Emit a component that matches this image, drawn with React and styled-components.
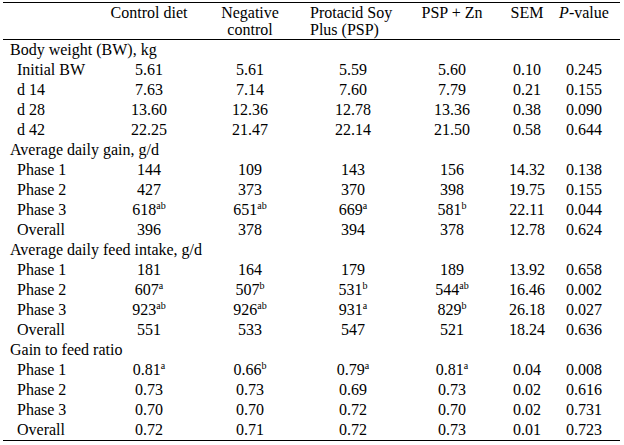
import styled, { createGlobalStyle } from 'styled-components';

const GlobalStyle = createGlobalStyle`
  body {
    margin: 0;
    background: #fff;
    color: #000;
  }
`;

const Page = styled.div`
  padding: 2px 0 0 3px;
`;

const Table = styled.div`
  width: 617px;
  border-top: 1px solid #000;
  border-bottom: 1px solid #000;
  font-family: 'Liberation Serif', 'Times New Roman', Times, serif;
  font-size: 16px;
`;

const cols = '97px 98px 104px 102px 96px 54px 66px';

const HeaderRow = styled.div`
  display: grid;
  grid-template-columns: ${cols};
  padding: 1px 0;
  line-height: 17px;
  border-bottom: 1px solid #000;
`;

const HeadCell = styled.div`
  text-align: ${p => p.$align || 'center'};
  padding-left: ${p => p.$pl || 0}px;
  padding-right: ${p => p.$pr || 0}px;
  white-space: nowrap;
`;

const Row = styled.div`
  display: grid;
  grid-template-columns: ${cols};
  height: 20px;
  line-height: 20px;
`;

const SectionLabel = styled.div`
  grid-column: 1 / -1;
  padding-left: 7px;
`;

const Label = styled.div`
  padding-left: 14px;
  white-space: nowrap;
`;

const Cell = styled.div`
  text-align: center;
  padding-right: ${p => p.$pr || 0}px;
  white-space: nowrap;
`;

const Sup = styled.sup`
  font-size: 10px;
  line-height: 0;
  vertical-align: 6px;
`;

const sections = [
  {
    title: 'Body weight (BW), kg',
    rows: [
      ['Initial BW', '5.61', '5.61', '5.59', '5.60', '0.10', '0.245'],
      ['d 14', '7.63', '7.14', '7.60', '7.79', '0.21', '0.155'],
      ['d 28', '13.60', '12.36', '12.78', '13.36', '0.38', '0.090'],
      ['d 42', '22.25', '21.47', '22.14', '21.50', '0.58', '0.644'],
    ],
  },
  {
    title: 'Average daily gain, g/d',
    rows: [
      ['Phase 1', '144', '109', '143', '156', '14.32', '0.138'],
      ['Phase 2', '427', '373', '370', '398', '19.75', '0.155'],
      ['Phase 3', '618^ab', '651^ab', '669^a', '581^b', '22.11', '0.044'],
      ['Overall', '396', '378', '394', '378', '12.78', '0.624'],
    ],
  },
  {
    title: 'Average daily feed intake, g/d',
    rows: [
      ['Phase 1', '181', '164', '179', '189', '13.92', '0.658'],
      ['Phase 2', '607^a', '507^b', '531^b', '544^ab', '16.46', '0.002'],
      ['Phase 3', '923^ab', '926^ab', '931^a', '829^b', '26.18', '0.027'],
      ['Overall', '551', '533', '547', '521', '18.24', '0.636'],
    ],
  },
  {
    title: 'Gain to feed ratio',
    rows: [
      ['Phase 1', '0.81^a', '0.66^b', '0.79^a', '0.81^a', '0.04', '0.008'],
      ['Phase 2', '0.73', '0.73', '0.69', '0.73', '0.02', '0.616'],
      ['Phase 3', '0.70', '0.70', '0.72', '0.70', '0.02', '0.731'],
      ['Overall', '0.72', '0.71', '0.72', '0.73', '0.01', '0.723'],
    ],
  },
];

// small right offsets so each number sits where the original puts it
const shifts = [0, 0, 0, 0, 0, 6];

function Value({ text }) {
  const [num, sup] = text.split('^');
  return (
    <>
      {num}
      {sup && <Sup>{sup}</Sup>}
    </>
  );
}

export default function App() {
  return (
    <Page>
      <GlobalStyle />
      <Table>
        <HeaderRow>
          <HeadCell />
          <HeadCell>Control diet</HeadCell>
          <HeadCell>Negative<br />control</HeadCell>
          <HeadCell $align="left" $pl={8}>Protacid Soy<br />Plus (PSP)</HeadCell>
          <HeadCell>PSP + Zn</HeadCell>
          <HeadCell>SEM</HeadCell>
          <HeadCell $pr={6}><i>P</i>-value</HeadCell>
        </HeaderRow>
        {sections.map(section => (
          <div key={section.title}>
            <Row>
              <SectionLabel>{section.title}</SectionLabel>
            </Row>
            {section.rows.map(([label, ...values]) => (
              <Row key={label}>
                <Label>{label}</Label>
                {values.map((v, i) => (
                  <Cell key={i} $pr={shifts[i]}>
                    <Value text={v} />
                  </Cell>
                ))}
              </Row>
            ))}
          </div>
        ))}
      </Table>
    </Page>
  );
}
